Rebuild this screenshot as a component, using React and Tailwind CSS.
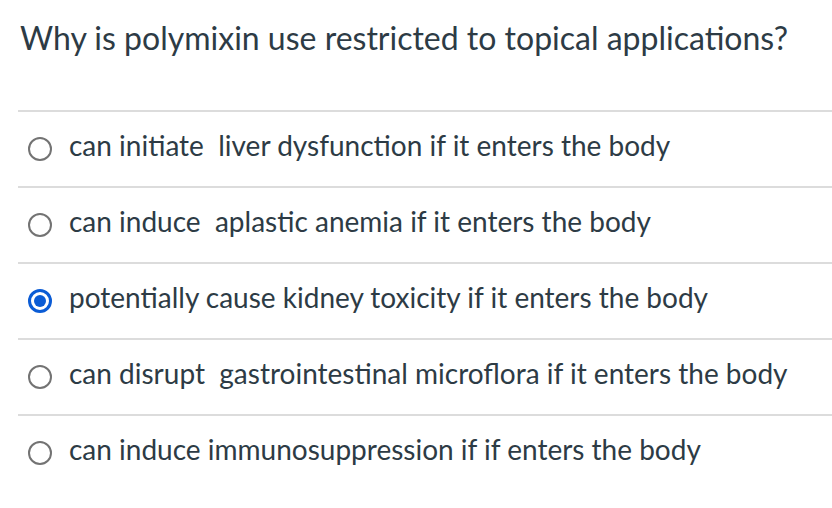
const answers = [
  { text: 'can initiate\u00a0 liver dysfunction if it enters the body' },
  { text: 'can induce\u00a0 aplastic anemia if it enters the body' },
  { text: 'potentially cause kidney toxicity if it enters the body', selected: true },
  { text: 'can disrupt\u00a0 gastrointestinal microflora if it enters the body' },
  { text: 'can induce immunosuppression if if enters the body' },
];

function Radio({ selected }) {
  if (selected) {
    return (
      <span className="flex items-center justify-center w-[24px] h-[24px] rounded-full border-[3px] border-[#0b5cd5] bg-white">
        <span className="w-[12px] h-[12px] rounded-full bg-[#0b5cd5]" />
      </span>
    );
  }
  return <span className="w-[24px] h-[24px] rounded-full border-2 border-[#737373] bg-white" />;
}

export default function App() {
  return (
    <div className="w-[832px] h-[508px] bg-white text-[#2d3b45] font-['Lato','Noto_Sans',sans-serif] overflow-hidden">
      <h1 className="pl-[20px] pt-[16px] h-[110px] text-[32px] leading-[44px]">
        Why is polymixin use restricted to topical applications?
      </h1>
      <div className="ml-[18px]">
        {answers.map((a, i) => (
          <div key={i} className="flex items-center gap-[17px] h-[76px] border-t-2 border-[#dcdcdc] pl-[10px]">
            <Radio selected={a.selected} />
            <span className="text-[28px] leading-none mb-[8px]">{a.text}</span>
          </div>
        ))}
      </div>
    </div>
  );
}
